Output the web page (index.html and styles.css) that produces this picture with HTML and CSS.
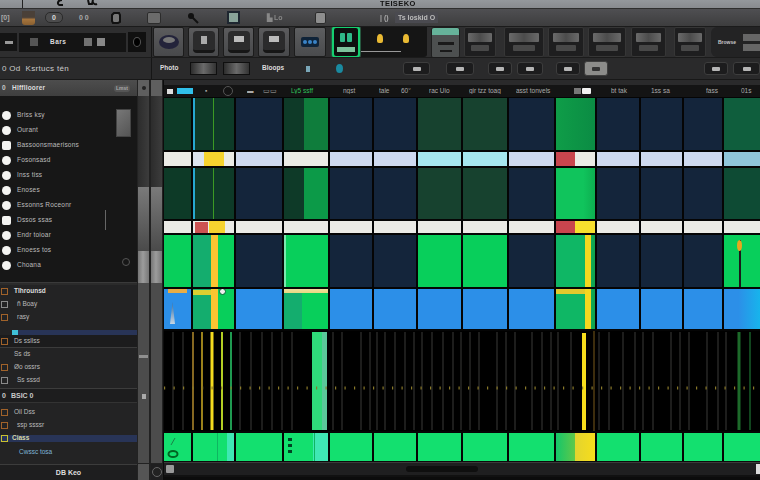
FILE: index.html
```html
<!DOCTYPE html>
<html lang="en">
<head>
<meta charset="utf-8">
<title>Teiseko</title>
<link rel="stylesheet" href="styles.css">
</head>
<body>
<div class="app">
  <header class="titlebar">
    <i class="t-stem"></i>
    <svg class="t-ic" width="8" height="6" viewBox="0 0 8 6"><path d="M6 0C1 0 1 5 4 5L7 5" fill="none" stroke="#111" stroke-width="2"/></svg>
    <svg class="t-ic2" width="12" height="6" viewBox="0 0 12 6"><path d="M2 0L3 4H6L7 0M7 0A3 3 0 0 0 11 4" fill="none" stroke="#111" stroke-width="2"/></svg>
    <span class="t-name">TEISEKO</span>
  </header>

  <div class="menubar">
    <span class="m m1">[0]</span>
    <i class="m-cup"></i>
    <span class="m-chip m2">0</span>
    <span class="m m3">0 0</span>
    <svg class="m-box m4" width="10" height="12" viewBox="0 0 10 12"><path d="M3 1H8L9 3V10L7 11H2L1 9V3Z" fill="#777" stroke="#111" stroke-width="2"/></svg>
    <span class="m-btn m5"></span>
    <svg class="m6" width="12" height="12" viewBox="0 0 12 12"><circle cx="4" cy="4" r="3" fill="#111"/><path d="M5 5L11 11" stroke="#111" stroke-width="2"/></svg>
    <span class="m-doc m7"></span>
    <span class="m m8">▙ Lo</span>
    <span class="m-btn m9"></span>
    <span class="m-rule m10">| ()</span>
    <span class="m m11">Ts loskid O</span>
  </div>

  <div class="toolbar">
    <div class="tool-left">
      <span class="dark-chip"><i></i></span>
      <div class="bars-panel">
        <i class="pb"></i><b>Bars</b><i class="pb lt"></i><i class="pb ltr"></i>
      </div>
      <span class="knob-box"><i></i></span>
    </div>
    <div class="tool-btn b30"><svg width="22" height="16" viewBox="0 0 22 16"><ellipse cx="11" cy="8" rx="10" ry="7" fill="#23233a"/><ellipse cx="11" cy="6" rx="6" ry="3" fill="#777"/></svg></div>
    <div class="tool-btn b30 inset"><span class="glyph"></span></div>
    <div class="tool-btn b30 inset"><span class="glyph wide"></span></div>
    <div class="tool-btn b32 inset"><span class="glyph wide"></span></div>
    <div class="tool-btn b32 blue"><span class="led-row"><i></i><i></i><i></i></span></div>
    <div class="face"><span class="eyes"><i></i><i></i></span><span class="mouth"></span></div>
    <div class="lamps">
      <span class="lamp"></span><span class="lamp"></span><span class="lamp-line"></span>
    </div>
    <div class="active-btn"><i class="ab-top"></i><i class="ab-mid"></i><i class="ab-bot"></i></div>
    <div class="dual d1"><i></i><u></u></div>
    <div class="dual d2"><i></i><u></u></div>
    <div class="dual d3"><i></i><u></u></div>
    <div class="dual d4"><i></i><u></u></div>
    <div class="dual d5"><i></i><u></u></div>
    <div class="dual d6"><i></i><u></u></div>
    <div class="end-panel"><span>Browse</span><div class="end-stack"><i></i><i></i></div></div>
  </div>

  <div class="row2">
    <div class="r2-left">0 Od &nbsp;Ksrtucs tén</div>
    <span class="lab w22 ml8">Photo</span>
    <span class="r2-chip w27 ml8"></span>
    <span class="r2-chip w27 ml6"></span>
    <span class="lab w26 ml12">Bloops</span>
    <span class="teal1 ml18"></span>
    <span class="teal2 ml26"></span>
    <span class="r2-btn w27 ml60"><i></i></span>
    <span class="r2-btn w28 ml16"><i></i></span>
    <span class="r2-btn w24 ml14"><i></i></span>
    <span class="r2-btn w26 ml5"><i></i></span>
    <span class="r2-btn w24 ml13"><i></i></span>
    <span class="r2-btn w24 ml4 light"><i></i></span>
    <span class="r2-btn w24 ml96"><i></i></span>
    <span class="r2-btn w27 ml5"><i></i></span>
  </div>

  <div class="body">
    <aside class="side">
      <div class="side-head"><span>0</span><b>Hlfflloorer</b><em>Lmst</em></div>
      <div class="list">
        <div class="li"><i></i><span>Briss ksy</span></div>
        <div class="li"><i></i><span>Ourant</span></div>
        <div class="li"><i class="sq"></i><span>Bassoonsmaerisons</span></div>
        <div class="li"><i></i><span>Fosonsasd</span></div>
        <div class="li"><i></i><span>Inss tiss</span></div>
        <div class="li"><i></i><span>Enoses</span></div>
        <div class="li"><i></i><span>Essonns Roceonr</span></div>
        <div class="li"><i class="sq"></i><span>Dssos ssas</span></div>
        <div class="li"><i></i><span>Endr toioar</span></div>
        <div class="li"><i></i><span>Enoess tos</span></div>
        <div class="li"><i></i><span>Choana</span></div>
        <span class="thumb"></span>
        <span class="vrule"></span>
        <span class="ring"></span>
      </div>
      <div class="side-sep"></div>
      <div class="tree">
        <div class="tr head"><b class="gl o"></b><span>Tlhrounsd</span></div>
        <div class="tr"><b class="gl"></b><span class="in">ñ Boay</span></div>
        <div class="tr"><b class="gl o"></b><span class="in">rasy</span></div>
        <div class="hl"><i></i></div>
        <div class="tr dark"><b class="gl o"></b><span>Ds ssllss</span></div>
        <div class="tr"><span class="in ind">Ss ds</span></div>
        <div class="tr"><b class="gl o"></b><span>Øo ossrs</span></div>
        <div class="tr"><b class="gl"></b><span class="in">Ss sssd</span></div>
      </div>
      <div class="group"><span>0</span><b>BSIC 0</b></div>
      <div class="tree tree2">
        <div class="tr"><b class="gl o"></b><span>Oil Dss</span></div>
        <div class="tr"><b class="gl o"></b><span class="in">ssp ssssr</span></div>
        <div class="hl2"><b class="gl y"></b><span>Ciass</span></div>
        <div class="tr last"><span class="deep">Cwssc tosa</span></div>
      </div>
      <div class="side-foot">DB Keo</div>
    </aside>

    <div class="tracks">
      <div class="track"><i class="top"><u></u></i><i class="dk"></i><i class="md"></i><i class="lt"></i><i class="low"><u class="grip"></u><u class="pip"></u></i><i class="foot"></i></div>
      <div class="track"><i class="top"></i><i class="dk"></i><i class="md"></i><i class="lt"></i><i class="low"></i><i class="foot round"><u></u></i></div>
    </div>

    <main class="arr">
      <div class="ruler-gap"></div>
      <div class="ruler">
        <span class="w10 r-chip"></span><span class="w16 r-cy"></span><span class="w14 r-t">▪</span>
        <span class="r-knob"></span><span class="w16 r-t ml14">▬</span><span class="w28 r-t">▭▭</span>
        <span class="w52 r-g">Ly5 ssff</span><span class="w36 r-t">ngst</span><span class="w22 r-t">tale</span>
        <span class="w28 r-t">60°</span><span class="w40 r-t">rac Uio</span><span class="w47 r-t">gir tzz toag</span>
        <span class="w58 r-t">asst tonvels</span><span class="tgl"><i></i><u></u></span><span class="w40 r-t ml20">bt tak</span>
        <span class="w55 r-t">1ss sa</span><span class="w35 r-t">fass</span><span class="w20 r-t">01s</span>
      </div>
      <div class="grid">
        <!-- row 1 -->
        <div class="c dg"></div><div class="c dg2"><i class="vg"></i><i class="cy"></i></div><div class="c nv"></div><div class="c split"><i class="sg"></i></div><div class="c nv"></div><div class="c nv"></div><div class="c tl"></div><div class="c tl"></div><div class="c nv"></div><div class="c g1"></div><div class="c nv"></div><div class="c nv"></div><div class="c nv"></div><div class="c g2"></div>
        <!-- strip 1 -->
        <div class="c wh"></div><div class="c wh"><i class="pbk"></i><i class="yk1"></i></div><div class="c pb2"></div><div class="c wh"></div><div class="c pb2"></div><div class="c pb2"></div><div class="c ac"></div><div class="c ac"></div><div class="c pb2"></div><div class="c wh"><i class="rd"></i></div><div class="c pb2"></div><div class="c pb2"></div><div class="c pb2"></div><div class="c sk"></div>
        <!-- row 2 -->
        <div class="c dg"></div><div class="c dg2"><i class="vg"></i><i class="cy"></i></div><div class="c nv"></div><div class="c split"><i class="sg b"></i></div><div class="c nv"></div><div class="c nv"></div><div class="c tl"></div><div class="c tl"></div><div class="c nv"></div><div class="c g3"></div><div class="c nv"></div><div class="c nv"></div><div class="c nv"></div><div class="c g4"></div>
        <!-- strip 2 -->
        <div class="c wh"></div><div class="c wh"><i class="rd2"></i><i class="yk2"></i></div><div class="c wh"></div><div class="c wh"></div><div class="c wh"></div><div class="c wh"></div><div class="c wh"></div><div class="c wh"></div><div class="c wh"></div><div class="c wh"><i class="rd"></i><i class="yk3"></i></div><div class="c wh"></div><div class="c wh"></div><div class="c wh"></div><div class="c wh"></div>
        <!-- green row -->
        <div class="c gr"></div><div class="c gr"><i class="tb"></i><i class="yb"></i></div><div class="c nv"></div><div class="c gr"><i class="ed"></i></div><div class="c nv"></div><div class="c nv"></div><div class="c gr"></div><div class="c gr"></div><div class="c nv"></div><div class="c gr t2"><i class="yb2"></i></div><div class="c nv"></div><div class="c nv"></div><div class="c nv"></div><div class="c gr"><i class="pin"></i></div>
        <!-- blue row -->
        <div class="c bl"><i class="ytop"></i><i class="fin"></i></div><div class="c gr"><i class="tb"></i><i class="yb"></i><i class="ytop2"></i><i class="dot"></i></div><div class="c bl"></div><div class="c gr"><i class="topw"></i><i class="tb"></i></div><div class="c bl"></div><div class="c bl"></div><div class="c bl"></div><div class="c bl"></div><div class="c bl"></div><div class="c gr t2"><i class="ytop3"></i><i class="yb2"></i></div><div class="c bl"></div><div class="c bl"></div><div class="c bl"></div><div class="c cy2"></div>
        <!-- lane -->
        <div class="lane">
          <svg width="596" height="100" viewBox="0 0 596 100">
            <path d="M9 1V99M19 1V99M76 1V99M87 1V99M98 1V99M108 1V99M118 1V99M128 1V99M169 1V99M178 1V99M197 1V99M206 1V99M213 1V99M221 1V99M231 1V99M241 1V99M250 1V99M258 1V99M268 1V99M279 1V99M289 1V99M297 1V99M306 1V99M315 1V99M333 1V99M342 1V99M351 1V99M368 1V99M378 1V99M387 1V99M394 1V99M407 1V99M435 1V99M445 1V99M459 1V99M471 1V99M479 1V99M489 1V99M507 1V99M516 1V99M525 1V99M543 1V99M554 1V99M562 1V99" stroke="#2a2a28" stroke-width="1.4" fill="none"/>
            <path d="M29 1V99" stroke="#a8822a" stroke-width="1.6"/>
            <path d="M38 1V99" stroke="#c2a322" stroke-width="1.6"/>
            <path d="M48 1V99" stroke="#f5dc1f" stroke-width="3"/>
            <path d="M58 1V99" stroke="#b4cf24" stroke-width="2"/>
            <path d="M67 1V99" stroke="#1f9a50" stroke-width="2"/>
            <rect x="148" y="1" width="15" height="98" fill="#2fd97a"/>
            <rect x="158" y="1" width="5" height="98" fill="#5ac89a"/>
            <path d="M420 2V99" stroke="#f7dd1c" stroke-width="4"/>
            <path d="M430 0V100" stroke="#7a5a1a" stroke-width="1"/>
            <path d="M575 1V99" stroke="#1d6a2a" stroke-width="3"/>
            <path d="M586 1V99" stroke="#175c28" stroke-width="1.5"/>
            <path d="M0 57H596" stroke="#8a7a2a" stroke-width="3" stroke-dasharray="1.2 8.3" fill="none"/>
          </svg>
        </div>
        <!-- bottom -->
        <div class="c br"><svg class="blob" width="14" height="22" viewBox="0 0 14 22"><path d="M5 8L9 1" stroke="#1a8048" stroke-width="1"/><ellipse cx="7" cy="17" rx="4.5" ry="3" fill="none" stroke="#062" stroke-width="2"/></svg></div><div class="c br"><i class="mint"></i><i class="seg"></i></div><div class="c br"></div><div class="c br"><i class="mint wide"></i><i class="seg l"></i><i class="dots"></i></div><div class="c br"></div><div class="c br"></div><div class="c br"></div><div class="c br"></div><div class="c br"></div><div class="c br y3"></div><div class="c br"></div><div class="c br"></div><div class="c br"></div><div class="c br"></div>
      </div>
      <div class="hscroll">
        <span class="hsq"></span>
        <span class="hthumb"></span><span class="hcorner"></span>
      </div>
    </main>
  </div>
</div>
</body>
</html>
```
FILE: styles.css
```css
*{box-sizing:border-box}
html,body{margin:0;padding:0;background:#111}
body{width:760px;height:480px;overflow:hidden;font:bold 6.5px/1 "Liberation Sans",Arial,sans-serif;color:#c9c9c9}
i,u,b,em{font-style:normal;text-decoration:none;display:block}
.app{width:760px;height:480px;display:flex;flex-direction:column;filter:blur(.35px)}

.titlebar{height:8px;background:linear-gradient(#94989c,#888b8f);position:relative;overflow:hidden;flex:none}
.t-stem{position:absolute;left:22px;top:0;width:1px;height:8px;background:#222}
.t-ic{position:absolute;left:56px;top:0}
.t-ic2{position:absolute;left:86px;top:0}
.t-name{position:absolute;left:380px;top:0;font-size:7.5px;color:#111;letter-spacing:.4px}

.menubar{height:18px;flex:none;display:flex;align-items:center;background:linear-gradient(#4f4f52,#3d3d3e);position:relative;border-top:1px solid #2e2e2e;font-size:7px;color:#aaa}
.m1{margin-left:1px;width:21px}
.m-cup{width:13px;height:14px;background:linear-gradient(#4a4038 45%,#a5743d 60%,#8a6030);border-radius:0 0 3px 3px}
.m-chip{width:18px;height:11px;border-radius:5px;background:#4c4c4d;border:1px solid #2a2a2a;margin-left:10px;text-align:center;line-height:9px;color:#ddd}
.m3{width:12px;margin-left:16px;white-space:nowrap}
.m4{margin-left:20px}
.m-btn{width:14px;height:12px;background:#6b6b6b;border:1px solid #2c2c2c;border-radius:2px}
.m5{margin-left:26px}
.m6{margin-left:26px}
.m-doc{width:13px;height:13px;background:#89a49a;border:2px solid #1e2630;margin-left:28px}
.m8{width:22px;margin-left:27px;white-space:nowrap;color:#888}
.m9{margin-left:26px;width:11px;background:#8e8e8e}
.m10{margin-left:54px;width:13px;color:#aaa;white-space:nowrap}
.m11{margin-left:2px;color:#bbb;white-space:nowrap;background:#4a4a50;padding:2px 3px}

.toolbar{height:32px;flex:none;display:flex;align-items:center;background:#2e2e2f;border-top:1px solid #1b1b1b;border-bottom:1px solid #1b1b1b;overflow:hidden}
.tool-left{width:152px;flex:none;height:100%;display:flex;align-items:center;gap:2px;border-right:1px solid #161616}
.dark-chip{width:17px;height:18px;background:#141414;display:flex;align-items:center;justify-content:center}
.dark-chip i{width:8px;height:3px;background:#999}
.bars-panel{width:107px;height:19px;background:#141414;display:flex;align-items:center;padding-left:11px;gap:6px}
.bars-panel b{width:28px;letter-spacing:.5px;color:#ddd;margin-left:6px}
.pb{width:8px;height:8px;background:#555}
.pb.lt{background:#727272}.pb.ltr{background:#888;margin-left:-1px}
.knob-box{width:18px;height:20px;background:#101010;display:flex;align-items:center;justify-content:center}
.knob-box i{width:8px;height:10px;border-radius:50%;border:1.5px solid #555;background:#000}

.tool-btn{height:30px;border-radius:2px;background:linear-gradient(#5b5b5d,#48494b);display:flex;align-items:center;justify-content:center;margin-left:4px;border:1px solid #1c1c1c;flex:none}
.tool-left + .tool-btn{margin-left:1px}
.b30{width:31px}.b32{width:32px}
.inset .glyph{width:22px;height:22px;border-radius:4px;background:#2b2b2c;display:block;position:relative;border-bottom:3px solid #161616}
.inset .glyph::after{content:"";position:absolute;left:8px;top:5px;width:6px;height:8px;background:#aaa}
.inset .glyph.wide::after{left:6px;width:10px;height:6px;background:#bbb}
.blue{background:linear-gradient(#5d5e60,#4a4b4d)}
.led-row{display:flex;gap:1px;background:#0f2338;padding:3px 2px;border-radius:2px}
.led-row i{width:4px;height:4px;border-radius:50%;background:#3a83c7}

.face{width:28px;height:32px;margin-left:6px;flex:none;border:2px solid #15d070;border-radius:4px;background:#0d0f0e;box-shadow:0 0 2px #15d070;display:flex;flex-direction:column;align-items:center;padding-top:5px;gap:5px}
.eyes{display:flex;gap:2px}
.eyes i{width:5px;height:9px;border-radius:1px;background:#2fb888}
.mouth{width:18px;height:5px;background:#7cc39c}
.lamps{width:66px;height:30px;background:#151515;margin-left:1px;flex:none;position:relative;display:flex;gap:20px;padding:7px 0 0 16px;border-radius:0 0 3px 0}
.lamp{width:6px;height:9px;background:#e9b933;border-radius:50% 50% 2px 2px}
.lamp-line{position:absolute;left:0;right:0;bottom:5px;height:1px;background:#999;width:40px}
.active-btn{width:29px;height:31px;background:#4d5050;margin-left:4px;flex:none;border-radius:3px 3px 2px 2px;position:relative;border:1px solid #1e1e1e;overflow:hidden}
.ab-top{height:7px;background:#66b39a}
.ab-mid{width:16px;height:3px;background:#1a1a1a;margin:7px auto 0}
.ab-bot{width:12px;height:2px;background:#1a1a1a;margin:5px auto 0}
.dual{height:30px;background:#1e1e1f;border-radius:2px;flex:none;display:flex;flex-direction:column;align-items:center;justify-content:center;gap:3px;border:1px solid #363636}
.dual i{width:78%;height:9px;background:linear-gradient(90deg,#6a6a6a,#4c4c4c 50%,#6a6a6a);border-radius:1px}
.dual u{width:60%;height:6px;background:#484848;border-radius:1px}
.d1{width:32px;margin-left:4px}
.d2{width:40px;margin-left:8px}
.d3{width:36px;margin-left:4px}
.d4{width:38px;margin-left:4px}
.d5{width:35px;margin-left:5px}
.d6{width:32px;margin-left:8px}
.end-panel{flex:1;height:30px;margin-left:5px;background:#232324;border-radius:6px 0 0 6px;display:flex;align-items:center;justify-content:space-between;padding-left:7px;font-size:5px;white-space:nowrap}
.end-stack{display:flex;flex-direction:column;gap:3px;width:17px}
.end-stack i{height:7px;background:#666}

.row2{height:22px;flex:none;display:flex;align-items:center;background:#2a2a2b;border-bottom:1px solid #181818;overflow:hidden}
.r2-left{width:152px;flex:none;height:100%;padding:7px 0 0 2px;font-size:8px;font-weight:normal;letter-spacing:.3px;border-right:1px solid #161616;white-space:nowrap;color:#ccc}
.lab{color:#ddd;white-space:nowrap;overflow:hidden}
.w14{width:14px}.w22{width:22px}.w24{width:24px}.w26{width:26px}.w27{width:27px}.w28{width:28px}
.ml4{margin-left:4px}.ml5{margin-left:5px}.ml6{margin-left:6px}.ml8{margin-left:8px}.ml12{margin-left:12px}.ml13{margin-left:13px}.ml14{margin-left:14px}.ml16{margin-left:16px}.ml18{margin-left:18px}.ml20{margin-left:20px}.ml26{margin-left:26px}.ml60{margin-left:60px}.ml96{margin-left:96px}
.r2-chip{height:13px;background:linear-gradient(90deg,#2d2d2d,#6a6a6a,#333);border:1px solid #0f0f0f;flex:none}
.teal1{width:4px;height:6px;background:#7aa7b8;flex:none}
.teal2{width:7px;height:9px;border-radius:50%;background:#1a8aa0;flex:none}
.r2-btn{height:13px;border-radius:3px;background:#1c1c1d;border:1px solid #3d3d3d;display:flex;align-items:center;justify-content:center;flex:none}
.r2-btn i{width:8px;height:4px;background:#b5b5b5;border-radius:1px}
.r2-btn.light{background:#8c8c8a;height:15px}
.r2-btn.light i{background:#333}

.body{flex:1;display:flex;min-height:0}
.side{width:137px;flex:none;display:flex;flex-direction:column;background:#232324;position:relative}
.side-head{height:16px;background:linear-gradient(#4d4d4d,#3f3f3f);display:flex;align-items:center;padding-left:2px;flex:none}
.side-head span{width:10px}.side-head b{letter-spacing:.2px;color:#ddd;width:102px}
.side-head em{font-size:5px;color:#aaa;background:#555;border-radius:3px;padding:1px 2px}
.list{height:186px;background:#171717;position:relative;padding-top:12px;flex:none}
.li{height:15px;display:flex;align-items:center;padding-left:2px;gap:6px;font-weight:normal;color:#bcbcbc;letter-spacing:.2px}
.li i{width:9px;height:9px;background:#f4f4f2;border-radius:50%;flex:none}
.li i.sq{border-radius:2px}
.thumb{position:absolute;left:116px;top:13px;width:15px;height:28px;background:linear-gradient(135deg,#777,#555);border:1px solid #444}
.vrule{position:absolute;left:105px;top:114px;width:1px;height:20px;background:#666}
.ring{position:absolute;left:122px;top:162px;width:8px;height:8px;border-radius:50%;border:1px solid #555}
.side-sep{height:3px;background:#2b2b2b;border-top:1px solid #3a3a3a;flex:none}
.tree{display:flex;flex-direction:column;background:#232324}
.tr{height:13px;display:flex;align-items:center;gap:3px;font-weight:normal;color:#bbb;flex:none;padding-left:1px}
.tr.head{font-weight:bold;color:#ddd}
.tr.dark{background:#1c1c1d;border-bottom:1px solid #3b3b3b}
.tr.last{padding-left:19px;height:15px;margin-top:3px}
.gl{width:7px;height:7px;flex:none;border:1px solid #8a8a8a;margin-right:3px}
.gl.o{border-color:#a0622a}
.gl.y{border-color:#c8c030}
.in{margin-left:3px}
.ind{margin-left:13px}
.deep{color:#7fb3d5}
.hl{height:5px;background:#283457;margin:6px 0 0 12px;flex:none}
.hl i{width:6px;height:5px;background:#3fc0d8}
.hl2{height:7px;background:#283457;display:flex;align-items:center;gap:1px;flex:none;color:#d8d8a8;padding-left:1px;margin-top:3px}
.group{height:15px;margin-top:1px;background:#1d1d1e;border-top:1px solid #3c3c3c;border-bottom:1px solid #333;display:flex;align-items:center;gap:5px;padding-left:2px;flex:none;font-size:7px}
.tree2{padding-top:3px}
.side-foot{margin-top:auto;height:16px;background:#1e1e1f;border-top:1px solid #3c3c3c;text-align:center;line-height:15px;font-size:7px;color:#ddd;flex:none}

.tracks{width:26px;flex:none;display:flex;gap:2px;background:#222;padding-left:1px}
.track{width:11px;display:flex;flex-direction:column}
.track .top{height:16px;background:#5f5f5f;display:flex;align-items:center;justify-content:center;flex:none}
.track .top u{width:4px;height:4px;border-radius:50%;background:#222}
.track .dk{height:91px;background:linear-gradient(90deg,#2c2c2c,#3c3c3c);flex:none}
.track .md{height:64px;background:linear-gradient(#7a7a7a,#4a4a4a);flex:none}
.track .lt{height:32px;background:linear-gradient(90deg,#777,#9c9c9c 45%,#777);flex:none}
.track .low{flex:1;background:#4c4c4c;display:flex;flex-direction:column;align-items:center;padding-top:72px;gap:36px}
.track .foot{height:17px;background:#555;flex:none;border-top:1px solid #222;display:flex;align-items:center;justify-content:center}
.track .foot.round{background:#1f1f20}
.foot.round u{width:10px;height:10px;border-radius:50%;border:1px solid #666;background:#222}
.grip{width:9px;height:3px;background:#909090}
.pip{width:4px;height:5px;background:#aaa}

.arr{flex:1;display:flex;flex-direction:column;background:#0c0c0c;min-width:0;padding-left:1px}
.ruler-gap{height:5px;flex:none;background:#2a2a2b}
.ruler{height:12px;flex:none;background:#141414;display:flex;align-items:center;font-weight:normal;color:#aaa;white-space:nowrap;overflow:hidden;padding-left:3px}
.w10{width:10px}.w16{width:16px}.w20{width:20px}.w35{width:35px}.w36{width:36px}.w40{width:40px}.w47{width:47px}.w52{width:52px}.w55{width:55px}.w58{width:58px}
.r-chip{height:5px;background:#ddd;width:6px;margin-right:4px;flex:none}
.r-cy{height:6px;background:#30c0ea;margin-right:12px;flex:none}
.r-t{flex:none;overflow:hidden}
.r-g{flex:none;color:#2fc05a;overflow:hidden}
.r-knob{width:10px;height:10px;border-radius:50%;border:1px solid #555;flex:none;margin-left:4px}
.tgl{display:flex;gap:1px;flex:none;margin-left:0}
.tgl i{width:7px;height:6px;background:#777}
.tgl u{width:9px;height:6px;background:#f2f2f2;border-radius:1px}

.grid{display:grid;grid-template-columns:27px 41px 46px 44px 42px 42px 43px 44px 45px 39px 42px 41px 38px 36px;grid-template-rows:52px 14px 51px 12px 52px 40px 100px 30px;gap:2px;background:#050505;flex:none;padding-top:1px;height:364px;overflow:hidden}
.c{position:relative;overflow:hidden}
.c i{position:absolute}
.dg{background:#0d3a27}
.dg2{background:#0e3a28}
.nv{background:#14253b}
.tl{background:#17422f}
.split{background:#0e3a28}
.sg{left:20px;right:0;top:0;bottom:0;background:#0f7d3c}
.sg.b{background:#0c9a48}
.vg{left:20px;top:0;width:1px;height:100%;background:#3c9a24}
.cy{left:0;top:0;width:1.5px;height:100%;background:#27a8d0}
.g1{background:linear-gradient(90deg,#0f9d48,#0b8c44)}
.g2{background:#0f5e3d}
.g3{background:linear-gradient(90deg,#10c45c 70%,#0dae50)}
.g4{background:#0e4b34}
.wh{background:#ebebe6}
.pb2{background:#ced9ef}
.ac{background:#a6e6ef}
.sk{background:#8fc6da}
.pbk{left:0;top:0;width:11px;height:100%;background:#dce4ef}
.yk1{left:11px;top:0;width:20px;height:100%;background:#f6d32f}
.rd{left:0;top:0;width:19px;height:100%;background:#c9454e}
.rd2{left:2px;top:1px;width:13px;height:11px;background:#cc5252}
.yk2{left:16px;top:0;width:16px;height:100%;background:#f6d32f}
.yk3{left:19px;top:0;width:20px;height:100%;background:#f7e02e}
.gr{background:#08cf5b}
.t2{background:linear-gradient(90deg,#0fb765 70%,#0fa24e)}
.tb{left:0;top:0;width:18px;height:100%;background:#14ad6e}
.yb{left:18px;top:0;width:7px;height:100%;background:#fcc531}
.yb2{left:29px;top:0;width:6px;height:100%;background:#f5d81f}
.ed{left:0;top:0;width:2px;height:100%;background:#7be6b0}
.pin{left:15px;top:5px;width:1.5px;height:47px;background:#1a1a1a}
.pin::before{content:"";position:absolute;left:-2px;top:0;width:5px;height:11px;background:#e8a71e;border-radius:50%}
.bl{background:#2c8fe8}
.cy2{background:linear-gradient(90deg,#2c8fe8 0,#2c8fe8 40%,#17b4ec 100%)}
.ytop{left:4px;top:0;width:19px;height:4px;background:#e8ad45}
.fin{left:6px;top:13px;width:5px;height:22px;background:linear-gradient(#3a6ea0,#c5d6e4);clip-path:polygon(50% 0,100% 100%,0 100%)}
.ytop2{left:0;top:1px;width:18px;height:5px;background:#dbcf30}
.dot{left:26px;top:-1px;width:7px;height:7px;border-radius:50%;background:#eee;border:1.5px solid #063}
.topw{left:0;top:0;width:100%;height:4px;background:linear-gradient(#f0e0a0,#e8d880);z-index:1}
.ytop3{left:0;top:0;width:29px;height:5px;background:#e2c92c;z-index:1}
.lane{grid-column:1/-1;background:#000;height:100px}
.lane svg{display:block}
.br{background:#13e06f}
.y3{background:linear-gradient(90deg,#14c66a,#5ec84a 48%,#e3d42e 50%,#f7dd1c)}
.mint{right:0;top:0;width:7px;height:100%;background:#3fe8b4}
.mint.wide{width:15px}
.seg{left:24px;top:0;width:1px;height:100%;background:#0fb561}
.seg.l{left:30px}
.dots{left:4px;top:5px;width:4px;height:16px;background:repeating-linear-gradient(#042 0 3px,transparent 3px 6px)}
.blob{position:absolute;left:2px;top:4px}

.hscroll{height:15px;flex:none;margin-top:1px;display:flex;align-items:center;background:#1f1f20;border-top:1px solid #3b3b3b;border-bottom:2px solid #111;padding-left:2px}
.hsq{width:8px;height:8px;background:#999;flex:none;border-radius:1px}
.hthumb{width:72px;height:6px;background:#0f0f0f;border-radius:3px;flex:none;margin-left:232px}
.hcorner{width:4px;height:10px;background:#ddd;margin-left:auto;flex:none}
```
